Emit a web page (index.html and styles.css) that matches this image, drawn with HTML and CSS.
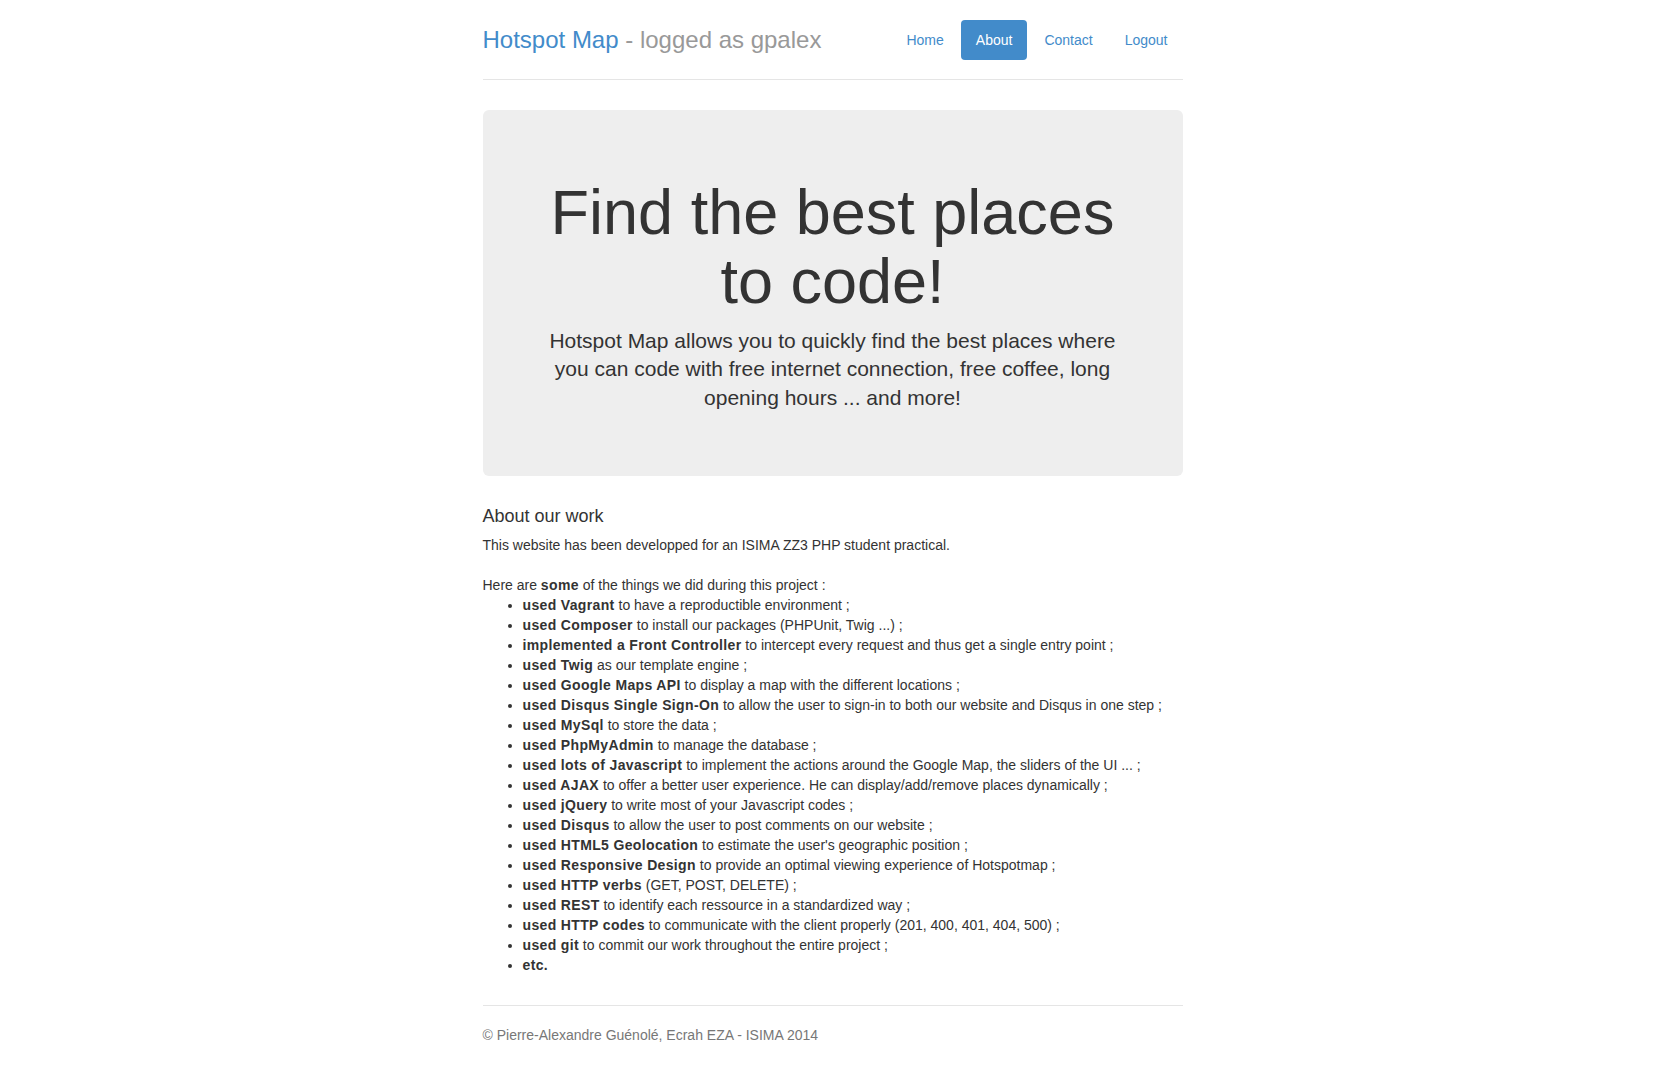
FILE: index.html
```html
<!DOCTYPE html>
<html lang="en">
<head>
<meta charset="utf-8">
<title>Hotspot Map - About</title>
<link rel="stylesheet" href="styles.css">
</head>
<body>
<div class="container">
  <div class="header">
    <ul class="nav-pills">
      <li><a href="#">Home</a></li>
      <li class="active"><a href="#">About</a></li>
      <li><a href="#">Contact</a></li>
      <li><a href="#">Logout</a></li>
    </ul>
    <h3 class="brand"><a href="#">Hotspot Map</a> <span class="muted">- logged as gpalex</span></h3>
  </div>

  <div class="jumbotron">
    <h1>Find the best places to code!</h1>
    <p class="lead">Hotspot Map allows you to quickly find the best places where you can code with free internet connection, free coffee, long opening hours ... and more!</p>
  </div>

  <div class="marketing">
    <h4>About our work</h4>
    <p class="intro">This website has been developped for an ISIMA ZZ3 PHP student practical.<br><br>Here are <strong>some</strong> of the things we did during this project :</p>
    <ul class="work">
      <li><strong>used Vagrant</strong> to have a reproductible environment ;</li>
      <li><strong>used Composer</strong> to install our packages (PHPUnit, Twig ...) ;</li>
      <li><strong>implemented a Front Controller</strong> to intercept every request and thus get a single entry point ;</li>
      <li><strong>used Twig</strong> as our template engine ;</li>
      <li><strong>used Google Maps API</strong> to display a map with the different locations ;</li>
      <li><strong>used Disqus Single Sign-On</strong> to allow the user to sign-in to both our website and Disqus in one step ;</li>
      <li><strong>used MySql</strong> to store the data ;</li>
      <li><strong>used PhpMyAdmin</strong> to manage the database ;</li>
      <li><strong>used lots of Javascript</strong> to implement the actions around the Google Map, the sliders of the UI ... ;</li>
      <li><strong>used AJAX</strong> to offer a better user experience. He can display/add/remove places dynamically ;</li>
      <li><strong>used jQuery</strong> to write most of your Javascript codes ;</li>
      <li><strong>used Disqus</strong> to allow the user to post comments on our website ;</li>
      <li><strong>used HTML5 Geolocation</strong> to estimate the user's geographic position ;</li>
      <li><strong>used Responsive Design</strong> to provide an optimal viewing experience of Hotspotmap ;</li>
      <li><strong>used HTTP verbs</strong> (GET, POST, DELETE) ;</li>
      <li><strong>used REST</strong> to identify each ressource in a standardized way ;</li>
      <li><strong>used HTTP codes</strong> to communicate with the client properly (201, 400, 401, 404, 500) ;</li>
      <li><strong>used git</strong> to commit our work throughout the entire project ;</li>
      <li><strong>etc.</strong></li>
    </ul>
  </div>

  <div class="footer">
    <p>&copy; Pierre-Alexandre Guénolé, Ecrah EZA - ISIMA 2014</p>
  </div>
</div>
</body>
</html>
```

FILE: styles.css
```css
* { box-sizing: border-box; }

html, body {
  margin: 0;
  padding: 0;
  background: #fff;
}

body {
  font-family: "Liberation Sans", Arial, Helvetica, sans-serif;
  font-size: 14px;
  line-height: 20px;
  color: #333;
  padding-top: 20px;
}

a { color: #428bca; text-decoration: none; }

.container {
  width: 700px;
  margin: 0 auto;
}

.header {
  border-bottom: 1px solid #e5e5e5;
  margin-bottom: 30px;
  display: flex;
  flex-direction: row-reverse;
  justify-content: space-between;
  align-items: flex-start;
}

.brand {
  margin: 0;
  padding-bottom: 19px;
  font-size: 24px;
  font-weight: 500;
  line-height: 40px;
  color: #999;
}

.brand .muted { color: #999; }

.nav-pills {
  list-style: none;
  margin: 0;
  padding: 0;
  display: flex;
  gap: 2px;
}

.nav-pills a {
  display: block;
  padding: 10px 15px;
  line-height: 20px;
  border-radius: 4px;
  color: #428bca;
}

.nav-pills .active a {
  background: #428bca;
  color: #fff;
}

.jumbotron {
  background: #eee;
  border-radius: 6px;
  padding: 48px 60px 49px;
  text-align: center;
  margin-bottom: 30px;
}

.jumbotron h1 {
  margin: 20px 0 10px;
  font-size: 63px;
  font-weight: 500;
  line-height: 1.1;
  color: #333;
}

.jumbotron .lead {
  margin: 0 0 15px;
  font-size: 21px;
  font-weight: 200;
  line-height: 28.5px;
  color: #333;
}

.marketing h4 {
  margin: 0 0 8px;
  padding-top: 1px;
  font-size: 18px;
  font-weight: 500;
  line-height: 1.1;
}

.marketing .intro { margin: 0; }

.marketing strong { letter-spacing: 0.35px; }

.work {
  margin: 0 0 30px;
  padding-left: 40px;
}

.footer {
  border-top: 1px solid #e5e5e5;
  padding-top: 19px;
  color: #777;
}

.footer p { margin: 0 0 10px; }
```
